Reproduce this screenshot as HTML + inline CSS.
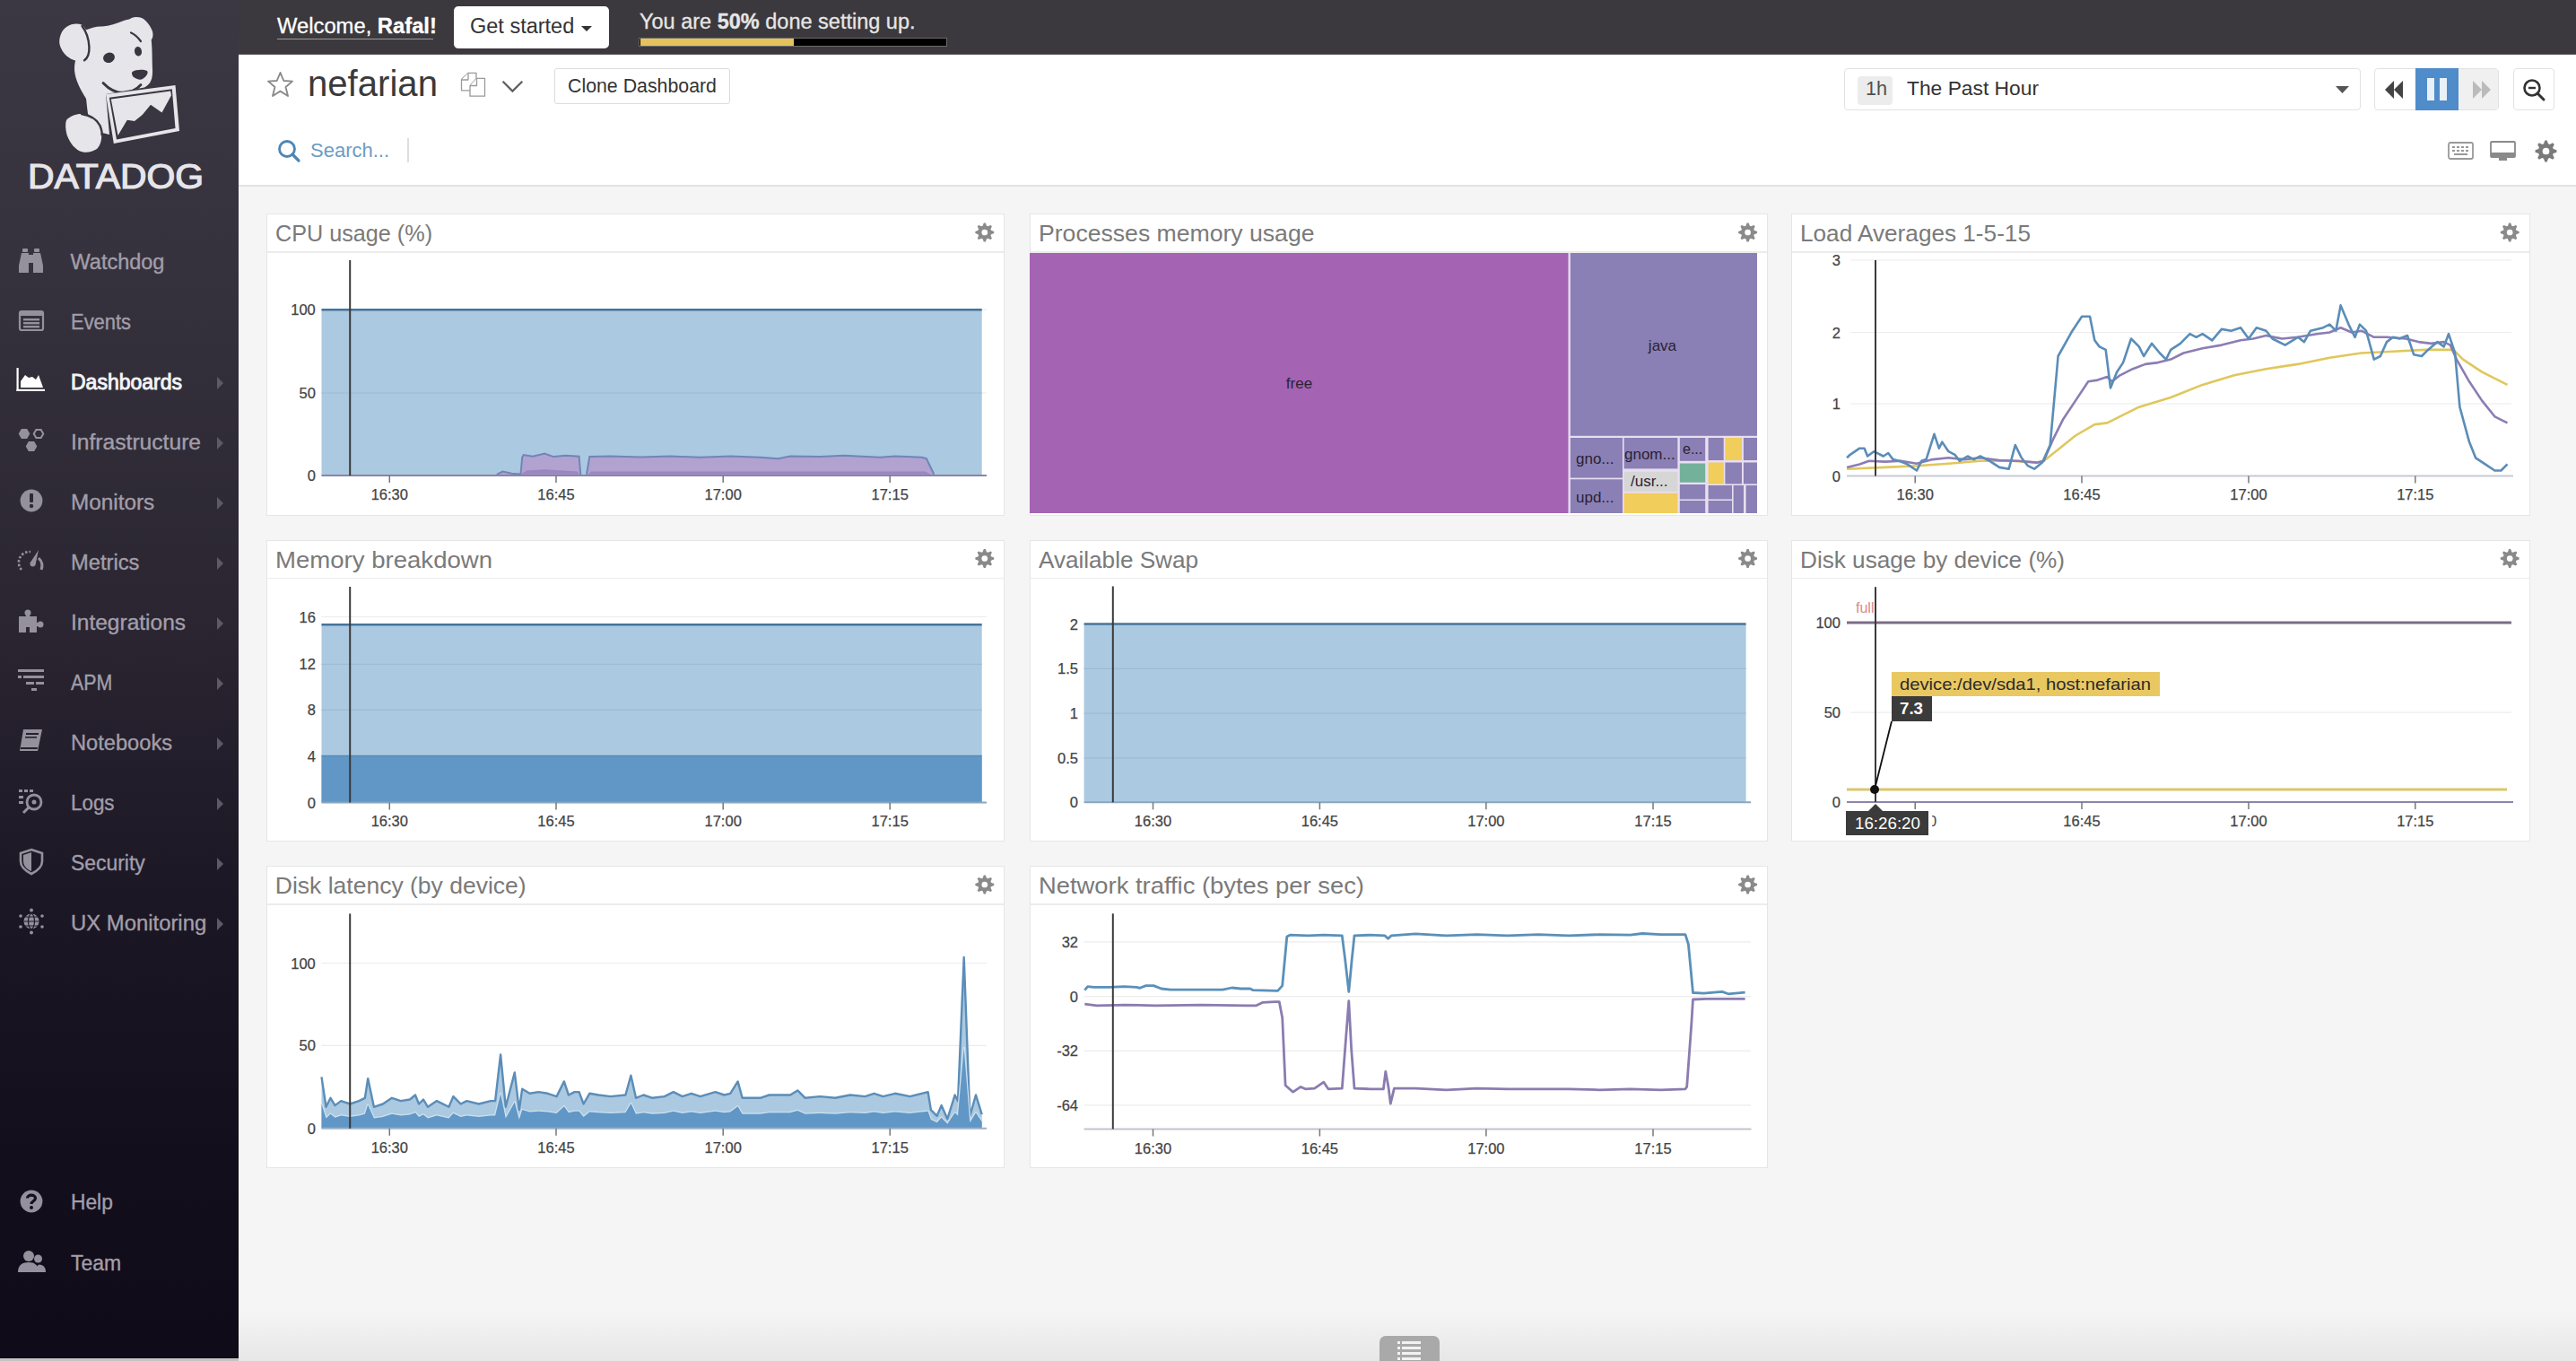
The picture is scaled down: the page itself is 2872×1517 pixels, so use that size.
<!DOCTYPE html>
<html><head><meta charset="utf-8"><title>Datadog</title><style>
*{margin:0;padding:0;box-sizing:border-box}
html,body{width:2872px;height:1517px;overflow:hidden;background:#f5f5f5;font-family:"Liberation Sans",sans-serif}
.t{position:absolute;white-space:nowrap}
.b{position:absolute}
svg{position:absolute;overflow:visible}
</style></head><body>
<div class="b" style="left:266.0px;top:0.0px;width:2606.0px;height:61.0px;background:#3b393d"></div>
<div class="b" style="left:266.0px;top:60.0px;width:2606.0px;height:1.0px;background:#5a585c"></div>
<div class="t" style="left:309.00px;top:17.61px;font-size:23.5px;line-height:23.5px;color:#ffffff;font-weight:normal;transform:scaleX(1.0115);transform-origin:0 0;-webkit-text-stroke:0.3px #fff;">Welcome, <b>Rafal!</b></div>
<div class="b" style="left:309.0px;top:42.5px;width:174.0px;height:1.5px;background:#9a9a9a"></div>
<div class="b" style="left:506.0px;top:7.0px;width:173.0px;height:47.0px;background:#fff;border-radius:5px"></div>
<div class="t" style="left:524.00px;top:17.61px;font-size:23.5px;line-height:23.5px;color:#333;font-weight:normal;">Get started</div>
<svg style="left:648px;top:29px" width="12" height="7"><polygon points="0,0 12,0 6,6" fill="#333"/></svg>
<div class="t" style="left:713.00px;top:12.61px;font-size:23.5px;line-height:23.5px;color:#e6e6e6;font-weight:normal;-webkit-text-stroke:0.3px #e6e6e6;">You are <b>50%</b> done setting up.</div>
<div class="b" style="left:712.0px;top:41.5px;width:344.0px;height:10.5px;background:#000;border:1.5px solid #6a6a6a"></div>
<div class="b" style="left:713.5px;top:43.0px;width:171.0px;height:7.5px;background:#e5c35c"></div>
<div class="b" style="left:266.0px;top:61.0px;width:2606.0px;height:145.5px;background:#fff"></div>
<div class="b" style="left:266.0px;top:206.0px;width:2606.0px;height:2.0px;background:#e2e2e2"></div>
<svg style="left:297px;top:78.5px" width="31" height="30" viewBox="0 0 31 30"><polygon points="15.5,2 19.3,11 29,11.6 21.5,18 24,28 15.5,22.6 7,28 9.5,18 2,11.6 11.7,11" fill="none" stroke="#8a8a8a" stroke-width="1.9" stroke-linejoin="round"/></svg>
<div class="t" style="left:343.00px;top:73.29px;font-size:41px;line-height:41px;color:#3a3a3a;font-weight:normal;transform:scaleX(0.9783);transform-origin:0 0;">nefarian</div>
<svg style="left:505px;top:75px" width="40" height="36" viewBox="0 0 40 36"><g fill="#fff" stroke="#9a9a9a" stroke-width="1.3" stroke-linejoin="round"><path d="M9.5 13.5 L17 6.3 H26 V25.8 H9.5 Z"/><path d="M17 6.3 V14 H9.5"/><path d="M19 20.5 L26.5 12.3 H35.5 V32.2 H19 Z"/><path d="M26.5 12.3 V20.5 H19"/></g></svg>
<svg style="left:559px;top:89px" width="26" height="16" viewBox="0 0 26 16"><polyline points="1.6,1.7 12.4,12.6 23.3,1.7" fill="none" stroke="#606060" stroke-width="2.3"/></svg>
<div class="b" style="left:618.0px;top:76.0px;width:196.0px;height:40.0px;border:1.5px solid #dcdcdc;border-radius:3px;background:#fff"></div>
<div class="t" style="left:633.00px;top:84.65px;font-size:22.5px;line-height:22.5px;color:#333;font-weight:normal;transform:scaleX(0.9477);transform-origin:0 0;">Clone Dashboard</div>
<svg style="left:309px;top:155px" width="28" height="26" viewBox="0 0 28 26"><circle cx="11" cy="11" r="8.5" fill="none" stroke="#4d86b5" stroke-width="2.8"/><path d="M17 17 L24 24" stroke="#4d86b5" stroke-width="3.2" stroke-linecap="round"/></svg>
<div class="t" style="left:346.00px;top:156.95px;font-size:22.5px;line-height:22.5px;color:#6c9cc1;font-weight:normal;transform:scaleX(0.9778);transform-origin:0 0;">Search...</div>
<div class="b" style="left:453.5px;top:154.0px;width:2.0px;height:27.0px;background:#dedede"></div>
<div class="b" style="left:2056.0px;top:76.0px;width:576.0px;height:47.0px;border:1.5px solid #e2e2e2;border-radius:4px;background:#fff"></div>
<div class="b" style="left:2071.0px;top:85.0px;width:39.0px;height:31.5px;background:#ececec;border-radius:4px"></div>
<div class="t" style="left:2079.50px;top:89.40px;font-size:21.5px;line-height:21.5px;color:#505050;font-weight:normal;transform:scaleX(1.0057);transform-origin:0 0;">1h</div>
<div class="t" style="left:2125.50px;top:89.40px;font-size:21.5px;line-height:21.5px;color:#333;font-weight:normal;transform:scaleX(1.0609);transform-origin:0 0;">The Past Hour</div>
<svg style="left:2604px;top:96px" width="15" height="9"><polygon points="0,0 15,0 7.5,8" fill="#555"/></svg>
<div class="b" style="left:2647.0px;top:76.0px;width:139.0px;height:47.0px;border:1.5px solid #e2e2e2;border-radius:4px;background:#fff;overflow:hidden"></div>
<div class="b" style="left:2741.0px;top:77.0px;width:44.0px;height:45.0px;background:#f0f0f0"></div>
<div class="b" style="left:2693.0px;top:76.0px;width:48.0px;height:47.0px;background:#4f8cc9"></div>
<svg style="left:2657px;top:88px" width="26" height="24" viewBox="0 0 26 24"><polygon points="12,2 2,12 12,22" fill="#444"/><polygon points="22,2 12,12 22,22" fill="#444"/></svg>
<div class="b" style="left:2706.0px;top:87.0px;width:8.0px;height:25.0px;background:#e8f0f8"></div>
<div class="b" style="left:2720.0px;top:87.0px;width:8.0px;height:25.0px;background:#e8f0f8"></div>
<svg style="left:2753px;top:88px" width="26" height="24" viewBox="0 0 26 24"><polygon points="4,2 14,12 4,22" fill="#bbb"/><polygon points="14,2 24,12 14,22" fill="#bbb"/></svg>
<div class="b" style="left:2802.0px;top:76.0px;width:46.0px;height:47.0px;border:1.5px solid #e2e2e2;border-radius:4px;background:#fff"></div>
<svg style="left:2812px;top:87px" width="28" height="26" viewBox="0 0 28 26"><circle cx="11" cy="11" r="8.5" fill="none" stroke="#333" stroke-width="2.6"/><path d="M7 11 H15" stroke="#333" stroke-width="2.4"/><path d="M17 17 L24 24" stroke="#333" stroke-width="3" stroke-linecap="round"/></svg>
<svg style="left:2729px;top:157px" width="29" height="22" viewBox="0 0 29 22"><rect x="1" y="2" width="27" height="18" rx="2" fill="none" stroke="#999" stroke-width="1.8"/><g fill="#999"><rect x="5" y="6" width="3" height="2"/><rect x="10" y="6" width="3" height="2"/><rect x="15" y="6" width="3" height="2"/><rect x="20" y="6" width="3" height="2"/><rect x="5" y="10" width="3" height="2"/><rect x="10" y="10" width="3" height="2"/><rect x="15" y="10" width="3" height="2"/><rect x="20" y="10" width="3" height="2"/><rect x="7" y="14" width="15" height="2"/></g></svg>
<svg style="left:2775px;top:156px" width="31" height="26" viewBox="0 0 31 26"><rect x="2" y="2" width="27" height="17" rx="1" fill="none" stroke="#8a8a8a" stroke-width="1.8"/><rect x="2" y="14" width="27" height="5" fill="#8a8a8a"/><rect x="11" y="19" width="9" height="4" fill="#8a8a8a"/></svg>
<svg style="left:0;top:0" width="1" height="1"><polygon points="2837.32,156.56 2839.68,156.56 2841.01,160.23 2842.57,160.88 2846.11,159.22 2847.78,160.89 2846.12,164.43 2846.77,165.99 2850.44,167.32 2850.44,169.68 2846.77,171.01 2846.12,172.57 2847.78,176.11 2846.11,177.78 2842.57,176.12 2841.01,176.77 2839.68,180.44 2837.32,180.44 2835.99,176.77 2834.43,176.12 2830.89,177.78 2829.22,176.11 2830.88,172.57 2830.23,171.01 2826.56,169.68 2826.56,167.32 2830.23,165.99 2830.88,164.43 2829.22,160.89 2830.89,159.22 2834.43,160.88 2835.99,160.23" fill="#7a7a7a"/><circle cx="2838.5" cy="168.5" r="3.84" fill="#fff"/></svg>
<div class="b" style="left:296.8px;top:238.0px;width:823.5px;height:336.5px;background:#fff;border:1.5px solid #e6e6e6"></div>
<div class="b" style="left:297.8px;top:280.0px;width:821.5px;height:1.5px;background:#ececec"></div>
<div class="t" style="left:306.80px;top:247.07px;font-size:26.5px;line-height:26.5px;color:#7a7a7a;font-weight:normal;transform:scaleX(0.9509);transform-origin:0 0;">CPU usage (%)</div>
<svg style="left:0;top:0" width="1" height="1"><polygon points="1096.77,248.55 1098.83,248.55 1099.99,251.77 1101.36,252.33 1104.46,250.88 1105.92,252.34 1104.47,255.44 1105.03,256.81 1108.25,257.97 1108.25,260.03 1105.03,261.19 1104.47,262.56 1105.92,265.66 1104.46,267.12 1101.36,265.67 1099.99,266.23 1098.83,269.45 1096.77,269.45 1095.61,266.23 1094.24,265.67 1091.14,267.12 1089.68,265.66 1091.13,262.56 1090.57,261.19 1087.35,260.03 1087.35,257.97 1090.57,256.81 1091.13,255.44 1089.68,252.34 1091.14,250.88 1094.24,252.33 1095.61,251.77" fill="#8a8a8a"/><circle cx="1097.8" cy="259" r="3.36" fill="#fff"/></svg>
<svg style="left:0;top:0" width="1" height="1"><line x1="358.5" y1="345.2" x2="1100" y2="345.2" stroke="#ececec" stroke-width="1.2"/><line x1="358.5" y1="438" x2="1100" y2="438" stroke="#ececec" stroke-width="1.2"/><rect x="358.5" y="345.2" width="736.2" height="184.8" fill="#abc9e0"/><line x1="358.5" y1="438" x2="1094.7" y2="438" stroke="#9dbbd3" stroke-width="1.2"/><polygon points="553.8,528.8 560.5,525.5 570.5,527.8 580.5,528.5 582.2,509.8 583.8,507.1 593.9,508.8 607.2,505.5 617.2,509.1 630.6,507.8 645.6,508.8 647.3,528.8 647.3,530.0 553.8,530.0" fill="#b2a2d0"/><polyline points="553.8,528.8 560.5,525.5 570.5,527.8 580.5,528.5 582.2,509.8 583.8,507.1 593.9,508.8 607.2,505.5 617.2,509.1 630.6,507.8 645.6,508.8 647.3,528.8" fill="none" stroke="#6f86b8" stroke-width="2"/><polygon points="654.0,528.8 657.3,509.1 680.7,508.5 714.1,509.5 747.4,508.5 780.8,509.8 814.2,508.5 847.6,509.8 867.6,511.2 881.0,508.5 914.4,509.1 941.1,507.8 981.2,509.8 997.9,508.5 1027.9,509.8 1032.9,511.2 1041.3,528.8 1041.3,530.0 654.0,530.0" fill="#b2a2d0"/><polyline points="654.0,528.8 657.3,509.1 680.7,508.5 714.1,509.5 747.4,508.5 780.8,509.8 814.2,508.5 847.6,509.8 867.6,511.2 881.0,508.5 914.4,509.1 941.1,507.8 981.2,509.8 997.9,508.5 1027.9,509.8 1032.9,511.2 1041.3,528.8" fill="none" stroke="#6f86b8" stroke-width="2"/><polygon points="580.5,528.8 587.2,524.5 607.2,523.2 643.9,525.5 645.6,528.8" fill="#9a86c0"/><polygon points="655.6,528.8 659.0,525.5 1031.3,525.5 1037.9,528.8" fill="#9a86c0"/><line x1="358.5" y1="345.2" x2="1094.7" y2="345.2" stroke="#46749c" stroke-width="2.6"/><line x1="358.5" y1="530" x2="1100" y2="530" stroke="#8a84a6" stroke-width="2"/><line x1="434.3" y1="530" x2="434.3" y2="538" stroke="#777" stroke-width="1.5"/><line x1="620" y1="530" x2="620" y2="538" stroke="#777" stroke-width="1.5"/><line x1="806.2" y1="530" x2="806.2" y2="538" stroke="#777" stroke-width="1.5"/><line x1="992.2" y1="530" x2="992.2" y2="538" stroke="#777" stroke-width="1.5"/><line x1="390.2" y1="290" x2="390.2" y2="530" stroke="#3a3a3a" stroke-width="2"/></svg>
<div class="t" style="left:324.25px;top:337.23px;font-size:16.5px;line-height:16.5px;color:#444;font-weight:normal;-webkit-text-stroke:0.25px #444;">100</div>
<div class="t" style="left:333.49px;top:430.03px;font-size:16.5px;line-height:16.5px;color:#444;font-weight:normal;-webkit-text-stroke:0.25px #444;">50</div>
<div class="t" style="left:342.64px;top:522.03px;font-size:16.5px;line-height:16.5px;color:#444;font-weight:normal;-webkit-text-stroke:0.25px #444;">0</div>
<div class="t" style="left:413.63px;top:542.53px;font-size:16.5px;line-height:16.5px;color:#444;font-weight:normal;-webkit-text-stroke:0.25px #444;">16:30</div>
<div class="t" style="left:599.33px;top:542.53px;font-size:16.5px;line-height:16.5px;color:#444;font-weight:normal;-webkit-text-stroke:0.25px #444;">16:45</div>
<div class="t" style="left:785.53px;top:542.53px;font-size:16.5px;line-height:16.5px;color:#444;font-weight:normal;-webkit-text-stroke:0.25px #444;">17:00</div>
<div class="t" style="left:971.53px;top:542.53px;font-size:16.5px;line-height:16.5px;color:#444;font-weight:normal;-webkit-text-stroke:0.25px #444;">17:15</div>
<div class="b" style="left:1147.6px;top:238.0px;width:823.5px;height:336.5px;background:#fff;border:1.5px solid #e6e6e6"></div>
<div class="b" style="left:1148.6px;top:280.0px;width:821.5px;height:1.5px;background:#ececec"></div>
<div class="t" style="left:1157.60px;top:247.07px;font-size:26.5px;line-height:26.5px;color:#7a7a7a;font-weight:normal;transform:scaleX(1.0038);transform-origin:0 0;">Processes memory usage</div>
<svg style="left:0;top:0" width="1" height="1"><polygon points="1947.57,248.55 1949.63,248.55 1950.79,251.77 1952.16,252.33 1955.26,250.88 1956.72,252.34 1955.27,255.44 1955.83,256.81 1959.05,257.97 1959.05,260.03 1955.83,261.19 1955.27,262.56 1956.72,265.66 1955.26,267.12 1952.16,265.67 1950.79,266.23 1949.63,269.45 1947.57,269.45 1946.41,266.23 1945.04,265.67 1941.94,267.12 1940.48,265.66 1941.93,262.56 1941.37,261.19 1938.15,260.03 1938.15,257.97 1941.37,256.81 1941.93,255.44 1940.48,252.34 1941.94,250.88 1945.04,252.33 1946.41,251.77" fill="#8a8a8a"/><circle cx="1948.6" cy="259" r="3.36" fill="#fff"/></svg>
<svg style="left:0;top:0" width="1" height="1"><rect x="1148" y="282" width="811" height="290" fill="#e9def0"/><rect x="1148" y="282" width="600.5" height="290.0" fill="#a463b3"/><rect x="1750.8" y="282" width="208.2" height="203.8" fill="#8a80b5"/><rect x="1750.8" y="488" width="58.2" height="44.6" fill="#8a80b5"/><rect x="1750.8" y="534.3" width="58.2" height="37.7" fill="#8a80b5"/><rect x="1810.6" y="488" width="59.8" height="34.4" fill="#8a80b5"/><rect x="1810.6" y="525.8" width="59.8" height="22.2" fill="#d6d6d6"/><rect x="1810.6" y="549.7" width="59.8" height="22.3" fill="#f1cd5b"/><rect x="1872.8" y="488" width="28.4" height="25.8" fill="#8a80b5"/><rect x="1872.8" y="516.5" width="28.4" height="21.2" fill="#74b19b"/><rect x="1872.8" y="540" width="28.4" height="16.5" fill="#8a80b5"/><rect x="1872.8" y="558" width="28.4" height="14.0" fill="#8a80b5"/><rect x="1904.6" y="488" width="17.1" height="25.0" fill="#8a80b5"/><rect x="1904.6" y="515.5" width="17.1" height="23.9" fill="#f1cd5b"/><rect x="1923.4" y="488" width="18.6" height="25.0" fill="#f1cd5b"/><rect x="1943.9" y="488" width="15.1" height="25.0" fill="#8a80b5"/><rect x="1923.4" y="515.5" width="18.6" height="23.9" fill="#8a80b5"/><rect x="1943.9" y="515.5" width="15.1" height="23.9" fill="#8a80b5"/><rect x="1904.6" y="541" width="26.4" height="15.5" fill="#8a80b5"/><rect x="1904.6" y="558" width="26.4" height="14.0" fill="#8a80b5"/><rect x="1932.6" y="541" width="11.4" height="31.0" fill="#8a80b5"/><rect x="1946.6" y="541" width="12.4" height="31.0" fill="#8a80b5"/></svg>
<div class="t" style="left:1433.84px;top:418.61px;font-size:17px;line-height:17px;color:#2a2233;font-weight:normal;">free</div>
<div class="t" style="left:1837.87px;top:376.61px;font-size:17px;line-height:17px;color:#2a2233;font-weight:normal;">java</div>
<div class="t" style="left:1757.00px;top:502.61px;font-size:17px;line-height:17px;color:#2a2233;font-weight:normal;">gno...</div>
<div class="t" style="left:1757.00px;top:545.61px;font-size:17px;line-height:17px;color:#2a2233;font-weight:normal;">upd...</div>
<div class="t" style="left:1811.00px;top:497.61px;font-size:17px;line-height:17px;color:#2a2233;font-weight:normal;">gnom...</div>
<div class="t" style="left:1818.00px;top:527.61px;font-size:17px;line-height:17px;color:#2a2233;font-weight:normal;">/usr...</div>
<div class="t" style="left:1876.00px;top:493.46px;font-size:16px;line-height:16px;color:#2a2233;font-weight:normal;">e...</div>
<div class="b" style="left:1997.2px;top:238.0px;width:823.5px;height:336.5px;background:#fff;border:1.5px solid #e6e6e6"></div>
<div class="b" style="left:1998.2px;top:280.0px;width:821.5px;height:1.5px;background:#ececec"></div>
<div class="t" style="left:2007.20px;top:247.07px;font-size:26.5px;line-height:26.5px;color:#7a7a7a;font-weight:normal;transform:scaleX(0.9871);transform-origin:0 0;">Load Averages 1-5-15</div>
<svg style="left:0;top:0" width="1" height="1"><polygon points="2797.17,248.55 2799.23,248.55 2800.39,251.77 2801.76,252.33 2804.86,250.88 2806.32,252.34 2804.87,255.44 2805.43,256.81 2808.65,257.97 2808.65,260.03 2805.43,261.19 2804.87,262.56 2806.32,265.66 2804.86,267.12 2801.76,265.67 2800.39,266.23 2799.23,269.45 2797.17,269.45 2796.01,266.23 2794.64,265.67 2791.54,267.12 2790.08,265.66 2791.53,262.56 2790.97,261.19 2787.75,260.03 2787.75,257.97 2790.97,256.81 2791.53,255.44 2790.08,252.34 2791.54,250.88 2794.64,252.33 2796.01,251.77" fill="#8a8a8a"/><circle cx="2798.2" cy="259" r="3.36" fill="#fff"/></svg>
<svg style="left:0;top:0" width="1" height="1"><line x1="2063" y1="290" x2="2800" y2="290" stroke="#ececec" stroke-width="1.2"/><line x1="2063" y1="370.5" x2="2800" y2="370.5" stroke="#ececec" stroke-width="1.2"/><line x1="2063" y1="450" x2="2800" y2="450" stroke="#ececec" stroke-width="1.2"/><polyline points="2059.1,522.7 2101.6,520.9 2137.0,519.2 2172.4,516.7 2207.8,513.8 2243.2,513.8 2271.5,515.6 2278.6,513.8 2296.3,499.7 2314.0,485.5 2335.3,473.1 2349.4,471.4 2384.8,453.7 2420.2,443.0 2455.6,428.9 2491.0,418.3 2526.5,411.2 2561.9,405.9 2597.3,398.8 2632.7,393.5 2668.1,391.7 2703.5,389.9 2735.3,389.9 2746.0,400.6 2767.2,414.7 2795.5,428.9" fill="none" stroke="#e0c75c" stroke-width="2.6" stroke-linejoin="round"/><polyline points="2059.1,520.9 2073.3,517.4 2083.9,513.8 2101.6,514.6 2119.3,513.8 2137.0,516.7 2154.7,512.1 2172.4,510.3 2190.1,512.1 2207.8,510.3 2229.1,513.1 2250.3,513.8 2271.5,515.6 2278.6,513.8 2289.3,489.1 2299.9,467.8 2314.0,446.6 2328.2,425.3 2338.8,423.6 2349.4,420.0 2354.7,425.3 2363.6,418.3 2377.8,411.2 2391.9,405.9 2406.1,404.1 2420.2,400.6 2434.4,393.5 2455.6,388.2 2476.9,384.6 2498.1,379.3 2512.3,377.5 2526.5,374.0 2544.2,377.5 2561.9,375.8 2583.1,372.2 2597.3,370.5 2609.6,365.2 2622.0,370.5 2632.7,368.7 2646.8,375.8 2661.0,375.8 2682.2,377.5 2696.4,381.1 2710.5,382.9 2724.7,381.1 2731.8,384.6 2738.9,400.6 2753.0,425.3 2767.2,446.6 2781.4,464.3 2795.5,471.4" fill="none" stroke="#8b7db3" stroke-width="2.6" stroke-linejoin="round"/><polyline points="2059.1,510.3 2062.7,506.8 2073.3,499.7 2078.6,499.7 2082.1,508.5 2089.2,503.2 2099.8,508.5 2105.2,505.0 2110.5,512.1 2117.5,513.8 2126.4,517.4 2137.0,524.5 2142.3,513.8 2147.6,512.1 2156.5,483.8 2161.8,499.7 2165.3,492.6 2172.4,503.2 2179.5,506.8 2184.8,513.8 2193.7,508.5 2200.7,512.1 2207.8,508.5 2218.4,513.8 2229.1,520.9 2239.7,522.7 2246.8,496.1 2253.8,510.3 2260.9,519.2 2268.0,522.7 2276.9,515.6 2285.7,496.1 2294.6,397.0 2310.5,368.7 2321.1,352.8 2330.0,352.8 2335.3,379.3 2340.6,386.4 2347.7,389.9 2353.0,432.4 2360.1,414.7 2367.1,404.1 2376.0,377.5 2384.8,386.4 2390.1,397.0 2399.0,382.9 2407.9,393.5 2414.9,400.6 2420.2,389.9 2430.9,382.9 2441.5,372.2 2448.6,375.8 2455.6,372.2 2466.3,379.3 2476.9,366.9 2487.5,368.7 2498.1,365.2 2507.0,377.5 2515.8,365.2 2526.5,368.7 2533.5,377.5 2547.7,384.6 2561.9,375.8 2568.9,381.1 2576.0,368.7 2590.2,365.2 2597.3,361.6 2604.3,368.7 2609.6,340.4 2618.5,361.6 2625.6,375.8 2630.9,361.6 2638.0,368.7 2646.8,400.6 2653.9,397.0 2661.0,381.1 2668.1,375.8 2675.1,377.5 2684.0,374.0 2691.1,395.2 2699.9,397.0 2707.0,389.9 2717.6,381.1 2724.7,386.4 2730.0,372.2 2737.1,393.5 2742.4,453.7 2753.0,492.6 2760.1,510.3 2770.7,517.4 2781.4,524.5 2788.4,524.5 2795.5,517.4" fill="none" stroke="#5a8db8" stroke-width="2.6" stroke-linejoin="round"/><line x1="2059" y1="530.5" x2="2802" y2="530.5" stroke="#c9c9d3" stroke-width="2"/><line x1="2135.2" y1="530.5" x2="2135.2" y2="538.5" stroke="#777" stroke-width="1.5"/><line x1="2321" y1="530.5" x2="2321" y2="538.5" stroke="#777" stroke-width="1.5"/><line x1="2507" y1="530.5" x2="2507" y2="538.5" stroke="#777" stroke-width="1.5"/><line x1="2692.8" y1="530.5" x2="2692.8" y2="538.5" stroke="#777" stroke-width="1.5"/><line x1="2091" y1="290" x2="2091" y2="530.5" stroke="#3a3a3a" stroke-width="2"/></svg>
<div class="t" style="left:2042.84px;top:282.03px;font-size:16.5px;line-height:16.5px;color:#444;font-weight:normal;-webkit-text-stroke:0.25px #444;">3</div>
<div class="t" style="left:2042.84px;top:362.53px;font-size:16.5px;line-height:16.5px;color:#444;font-weight:normal;-webkit-text-stroke:0.25px #444;">2</div>
<div class="t" style="left:2042.84px;top:442.03px;font-size:16.5px;line-height:16.5px;color:#444;font-weight:normal;-webkit-text-stroke:0.25px #444;">1</div>
<div class="t" style="left:2042.84px;top:522.53px;font-size:16.5px;line-height:16.5px;color:#444;font-weight:normal;-webkit-text-stroke:0.25px #444;">0</div>
<div class="t" style="left:2114.53px;top:543.03px;font-size:16.5px;line-height:16.5px;color:#444;font-weight:normal;-webkit-text-stroke:0.25px #444;">16:30</div>
<div class="t" style="left:2300.33px;top:543.03px;font-size:16.5px;line-height:16.5px;color:#444;font-weight:normal;-webkit-text-stroke:0.25px #444;">16:45</div>
<div class="t" style="left:2486.33px;top:543.03px;font-size:16.5px;line-height:16.5px;color:#444;font-weight:normal;-webkit-text-stroke:0.25px #444;">17:00</div>
<div class="t" style="left:2672.13px;top:543.03px;font-size:16.5px;line-height:16.5px;color:#444;font-weight:normal;-webkit-text-stroke:0.25px #444;">17:15</div>
<div class="b" style="left:296.8px;top:601.5px;width:823.5px;height:336.5px;background:#fff;border:1.5px solid #e6e6e6"></div>
<div class="b" style="left:297.8px;top:643.5px;width:821.5px;height:1.5px;background:#ececec"></div>
<div class="t" style="left:306.80px;top:610.57px;font-size:26.5px;line-height:26.5px;color:#7a7a7a;font-weight:normal;transform:scaleX(1.0401);transform-origin:0 0;">Memory breakdown</div>
<svg style="left:0;top:0" width="1" height="1"><polygon points="1096.77,612.05 1098.83,612.05 1099.99,615.27 1101.36,615.83 1104.46,614.38 1105.92,615.84 1104.47,618.94 1105.03,620.31 1108.25,621.47 1108.25,623.53 1105.03,624.69 1104.47,626.06 1105.92,629.16 1104.46,630.62 1101.36,629.17 1099.99,629.73 1098.83,632.95 1096.77,632.95 1095.61,629.73 1094.24,629.17 1091.14,630.62 1089.68,629.16 1091.13,626.06 1090.57,624.69 1087.35,623.53 1087.35,621.47 1090.57,620.31 1091.13,618.94 1089.68,615.84 1091.14,614.38 1094.24,615.83 1095.61,615.27" fill="#8a8a8a"/><circle cx="1097.8" cy="622.5" r="3.36" fill="#fff"/></svg>
<svg style="left:0;top:0" width="1" height="1"><line x1="358.5" y1="687.5" x2="1100" y2="687.5" stroke="#ececec" stroke-width="1.2"/><rect x="358.5" y="696.2" width="736.2" height="198.3" fill="#abc9e0"/><rect x="358.5" y="842.5" width="736.2" height="52.0" fill="#6097c6"/><line x1="358.5" y1="740.3" x2="1094.7" y2="740.3" stroke="#9dbbd3" stroke-width="1.2"/><line x1="358.5" y1="791.4" x2="1094.7" y2="791.4" stroke="#9dbbd3" stroke-width="1.2"/><line x1="358.5" y1="696.2" x2="1094.7" y2="696.2" stroke="#46749c" stroke-width="2.6"/><line x1="358.5" y1="842.5" x2="1094.7" y2="842.5" stroke="#5a8ab8" stroke-width="1.5"/><line x1="358.5" y1="894.5" x2="1100" y2="894.5" stroke="#8aa6c0" stroke-width="2"/><line x1="434.3" y1="894.5" x2="434.3" y2="902.5" stroke="#777" stroke-width="1.5"/><line x1="620" y1="894.5" x2="620" y2="902.5" stroke="#777" stroke-width="1.5"/><line x1="806.2" y1="894.5" x2="806.2" y2="902.5" stroke="#777" stroke-width="1.5"/><line x1="992.2" y1="894.5" x2="992.2" y2="902.5" stroke="#777" stroke-width="1.5"/><line x1="390.2" y1="654" x2="390.2" y2="894.5" stroke="#3a3a3a" stroke-width="2"/></svg>
<div class="t" style="left:333.49px;top:679.53px;font-size:16.5px;line-height:16.5px;color:#444;font-weight:normal;-webkit-text-stroke:0.25px #444;">16</div>
<div class="t" style="left:333.49px;top:732.33px;font-size:16.5px;line-height:16.5px;color:#444;font-weight:normal;-webkit-text-stroke:0.25px #444;">12</div>
<div class="t" style="left:342.64px;top:783.43px;font-size:16.5px;line-height:16.5px;color:#444;font-weight:normal;-webkit-text-stroke:0.25px #444;">8</div>
<div class="t" style="left:342.64px;top:835.13px;font-size:16.5px;line-height:16.5px;color:#444;font-weight:normal;-webkit-text-stroke:0.25px #444;">4</div>
<div class="t" style="left:342.64px;top:886.53px;font-size:16.5px;line-height:16.5px;color:#444;font-weight:normal;-webkit-text-stroke:0.25px #444;">0</div>
<div class="t" style="left:413.63px;top:907.03px;font-size:16.5px;line-height:16.5px;color:#444;font-weight:normal;-webkit-text-stroke:0.25px #444;">16:30</div>
<div class="t" style="left:599.33px;top:907.03px;font-size:16.5px;line-height:16.5px;color:#444;font-weight:normal;-webkit-text-stroke:0.25px #444;">16:45</div>
<div class="t" style="left:785.53px;top:907.03px;font-size:16.5px;line-height:16.5px;color:#444;font-weight:normal;-webkit-text-stroke:0.25px #444;">17:00</div>
<div class="t" style="left:971.53px;top:907.03px;font-size:16.5px;line-height:16.5px;color:#444;font-weight:normal;-webkit-text-stroke:0.25px #444;">17:15</div>
<div class="b" style="left:1147.6px;top:601.5px;width:823.5px;height:336.5px;background:#fff;border:1.5px solid #e6e6e6"></div>
<div class="b" style="left:1148.6px;top:643.5px;width:821.5px;height:1.5px;background:#ececec"></div>
<div class="t" style="left:1157.60px;top:610.57px;font-size:26.5px;line-height:26.5px;color:#7a7a7a;font-weight:normal;transform:scaleX(0.9849);transform-origin:0 0;">Available Swap</div>
<svg style="left:0;top:0" width="1" height="1"><polygon points="1947.57,612.05 1949.63,612.05 1950.79,615.27 1952.16,615.83 1955.26,614.38 1956.72,615.84 1955.27,618.94 1955.83,620.31 1959.05,621.47 1959.05,623.53 1955.83,624.69 1955.27,626.06 1956.72,629.16 1955.26,630.62 1952.16,629.17 1950.79,629.73 1949.63,632.95 1947.57,632.95 1946.41,629.73 1945.04,629.17 1941.94,630.62 1940.48,629.16 1941.93,626.06 1941.37,624.69 1938.15,623.53 1938.15,621.47 1941.37,620.31 1941.93,618.94 1940.48,615.84 1941.94,614.38 1945.04,615.83 1946.41,615.27" fill="#8a8a8a"/><circle cx="1948.6" cy="622.5" r="3.36" fill="#fff"/></svg>
<svg style="left:0;top:0" width="1" height="1"><rect x="1208.6" y="695.5" width="738.0" height="198.8" fill="#abc9e0"/><line x1="1208.6" y1="745.4" x2="1946.6" y2="745.4" stroke="#9dbbd3" stroke-width="1.2"/><line x1="1208.6" y1="795.2" x2="1946.6" y2="795.2" stroke="#9dbbd3" stroke-width="1.2"/><line x1="1208.6" y1="844.8" x2="1946.6" y2="844.8" stroke="#9dbbd3" stroke-width="1.2"/><line x1="1208.6" y1="695.5" x2="1946.6" y2="695.5" stroke="#46749c" stroke-width="2.6"/><line x1="1208.6" y1="894.3" x2="1952" y2="894.3" stroke="#8aa6c0" stroke-width="2"/><line x1="1285.5" y1="894.3" x2="1285.5" y2="902.3" stroke="#777" stroke-width="1.5"/><line x1="1471.4" y1="894.3" x2="1471.4" y2="902.3" stroke="#777" stroke-width="1.5"/><line x1="1656.9" y1="894.3" x2="1656.9" y2="902.3" stroke="#777" stroke-width="1.5"/><line x1="1843" y1="894.3" x2="1843" y2="902.3" stroke="#777" stroke-width="1.5"/><line x1="1240.8" y1="653.5" x2="1240.8" y2="894.3" stroke="#3a3a3a" stroke-width="2"/></svg>
<div class="t" style="left:1192.84px;top:687.53px;font-size:16.5px;line-height:16.5px;color:#444;font-weight:normal;-webkit-text-stroke:0.25px #444;">2</div>
<div class="t" style="left:1179.07px;top:737.43px;font-size:16.5px;line-height:16.5px;color:#444;font-weight:normal;-webkit-text-stroke:0.25px #444;">1.5</div>
<div class="t" style="left:1192.84px;top:787.23px;font-size:16.5px;line-height:16.5px;color:#444;font-weight:normal;-webkit-text-stroke:0.25px #444;">1</div>
<div class="t" style="left:1179.07px;top:836.83px;font-size:16.5px;line-height:16.5px;color:#444;font-weight:normal;-webkit-text-stroke:0.25px #444;">0.5</div>
<div class="t" style="left:1192.84px;top:886.33px;font-size:16.5px;line-height:16.5px;color:#444;font-weight:normal;-webkit-text-stroke:0.25px #444;">0</div>
<div class="t" style="left:1264.83px;top:906.83px;font-size:16.5px;line-height:16.5px;color:#444;font-weight:normal;-webkit-text-stroke:0.25px #444;">16:30</div>
<div class="t" style="left:1450.73px;top:906.83px;font-size:16.5px;line-height:16.5px;color:#444;font-weight:normal;-webkit-text-stroke:0.25px #444;">16:45</div>
<div class="t" style="left:1636.23px;top:906.83px;font-size:16.5px;line-height:16.5px;color:#444;font-weight:normal;-webkit-text-stroke:0.25px #444;">17:00</div>
<div class="t" style="left:1822.33px;top:906.83px;font-size:16.5px;line-height:16.5px;color:#444;font-weight:normal;-webkit-text-stroke:0.25px #444;">17:15</div>
<div class="b" style="left:1997.2px;top:601.5px;width:823.5px;height:336.5px;background:#fff;border:1.5px solid #e6e6e6"></div>
<div class="b" style="left:1998.2px;top:643.5px;width:821.5px;height:1.5px;background:#ececec"></div>
<div class="t" style="left:2007.20px;top:610.57px;font-size:26.5px;line-height:26.5px;color:#7a7a7a;font-weight:normal;transform:scaleX(0.9869);transform-origin:0 0;">Disk usage by device (%)</div>
<svg style="left:0;top:0" width="1" height="1"><polygon points="2797.17,612.05 2799.23,612.05 2800.39,615.27 2801.76,615.83 2804.86,614.38 2806.32,615.84 2804.87,618.94 2805.43,620.31 2808.65,621.47 2808.65,623.53 2805.43,624.69 2804.87,626.06 2806.32,629.16 2804.86,630.62 2801.76,629.17 2800.39,629.73 2799.23,632.95 2797.17,632.95 2796.01,629.73 2794.64,629.17 2791.54,630.62 2790.08,629.16 2791.53,626.06 2790.97,624.69 2787.75,623.53 2787.75,621.47 2790.97,620.31 2791.53,618.94 2790.08,615.84 2791.54,614.38 2794.64,615.83 2796.01,615.27" fill="#8a8a8a"/><circle cx="2798.2" cy="622.5" r="3.36" fill="#fff"/></svg>
<svg style="left:0;top:0" width="1" height="1"><line x1="2063" y1="794.2" x2="2800" y2="794.2" stroke="#ececec" stroke-width="1.2"/><line x1="2059" y1="694" x2="2800" y2="694" stroke="#7c6c86" stroke-width="3"/><line x1="2059" y1="880" x2="2795" y2="880" stroke="#d8c66e" stroke-width="3.2"/><line x1="2059" y1="894" x2="2802" y2="894" stroke="#8a85ab" stroke-width="2"/><line x1="2135.2" y1="894" x2="2135.2" y2="902" stroke="#777" stroke-width="1.5"/><line x1="2321" y1="894" x2="2321" y2="902" stroke="#777" stroke-width="1.5"/><line x1="2507" y1="894" x2="2507" y2="902" stroke="#777" stroke-width="1.5"/><line x1="2692.8" y1="894" x2="2692.8" y2="902" stroke="#777" stroke-width="1.5"/><line x1="2091" y1="654.3" x2="2091" y2="894" stroke="#3a3a3a" stroke-width="2"/><line x1="2090" y1="880" x2="2109" y2="804" stroke="#111" stroke-width="1.8"/><circle cx="2090" cy="880" r="5" fill="#111"/><polygon points="2083,904 2091,896 2099,904" fill="#3a3a3a"/></svg>
<div class="t" style="left:2069.00px;top:670.46px;font-size:16px;line-height:16px;color:#d98a8a;font-weight:normal;">full</div>
<div class="b" style="left:2108.7px;top:748.9px;width:299.0px;height:27.0px;background:#e9c862"></div>
<div class="t" style="left:2118.00px;top:753.42px;font-size:19px;line-height:19px;color:#2b2b2b;font-weight:normal;transform:scaleX(1.0644);transform-origin:0 0;">device:/dev/sda1, host:nefarian</div>
<div class="b" style="left:2108.7px;top:775.8px;width:45.0px;height:28.2px;background:#3b3b3b"></div>
<div class="t" style="left:2118.00px;top:780.76px;font-size:18px;line-height:18px;color:#fff;font-weight:bold;transform:scaleX(1.0392);transform-origin:0 0;">7.3</div>
<div class="b" style="left:2058.0px;top:904.0px;width:92.0px;height:26.5px;background:#3b3b3b"></div>
<div class="t" style="left:2068.00px;top:908.42px;font-size:19px;line-height:19px;color:#fff;font-weight:normal;transform:scaleX(0.9864);transform-origin:0 0;">16:26:20</div>
<div class="t" style="left:2024.44px;top:686.03px;font-size:16.5px;line-height:16.5px;color:#444;font-weight:normal;-webkit-text-stroke:0.25px #444;">100</div>
<div class="t" style="left:2033.68px;top:786.23px;font-size:16.5px;line-height:16.5px;color:#444;font-weight:normal;-webkit-text-stroke:0.25px #444;">50</div>
<div class="t" style="left:2042.84px;top:886.03px;font-size:16.5px;line-height:16.5px;color:#444;font-weight:normal;-webkit-text-stroke:0.25px #444;">0</div>
<div class="t" style="left:2150.00px;top:906.63px;font-size:16.5px;line-height:16.5px;color:#444;font-weight:normal;clip-path:inset(0 0 0 45%);">0</div>
<div class="t" style="left:2300.33px;top:906.63px;font-size:16.5px;line-height:16.5px;color:#444;font-weight:normal;-webkit-text-stroke:0.25px #444;">16:45</div>
<div class="t" style="left:2486.33px;top:906.63px;font-size:16.5px;line-height:16.5px;color:#444;font-weight:normal;-webkit-text-stroke:0.25px #444;">17:00</div>
<div class="t" style="left:2672.13px;top:906.63px;font-size:16.5px;line-height:16.5px;color:#444;font-weight:normal;-webkit-text-stroke:0.25px #444;">17:15</div>
<div class="b" style="left:296.8px;top:965.0px;width:823.5px;height:336.5px;background:#fff;border:1.5px solid #e6e6e6"></div>
<div class="b" style="left:297.8px;top:1007.0px;width:821.5px;height:1.5px;background:#ececec"></div>
<div class="t" style="left:306.80px;top:974.07px;font-size:26.5px;line-height:26.5px;color:#7a7a7a;font-weight:normal;">Disk latency (by device)</div>
<svg style="left:0;top:0" width="1" height="1"><polygon points="1096.77,975.55 1098.83,975.55 1099.99,978.77 1101.36,979.33 1104.46,977.88 1105.92,979.34 1104.47,982.44 1105.03,983.81 1108.25,984.97 1108.25,987.03 1105.03,988.19 1104.47,989.56 1105.92,992.66 1104.46,994.12 1101.36,992.67 1099.99,993.23 1098.83,996.45 1096.77,996.45 1095.61,993.23 1094.24,992.67 1091.14,994.12 1089.68,992.66 1091.13,989.56 1090.57,988.19 1087.35,987.03 1087.35,984.97 1090.57,983.81 1091.13,982.44 1089.68,979.34 1091.14,977.88 1094.24,979.33 1095.61,978.77" fill="#8a8a8a"/><circle cx="1097.8" cy="986" r="3.36" fill="#fff"/></svg>
<svg style="left:0;top:0" width="1" height="1"><line x1="358.5" y1="1073.5" x2="1100" y2="1073.5" stroke="#ececec" stroke-width="1.2"/><line x1="358.5" y1="1165.4" x2="1100" y2="1165.4" stroke="#ececec" stroke-width="1.2"/><polygon points="358.5,1200.4 363.5,1233.8 368.5,1223.8 373.5,1232.1 380.2,1227.1 390.2,1230.5 400.2,1227.1 406.9,1223.8 410.2,1202.1 416.9,1233.8 426.9,1230.5 436.9,1223.8 446.9,1227.1 457.0,1225.5 463.0,1220.5 467.0,1230.5 472.0,1225.5 477.0,1233.8 487.0,1227.1 500.4,1233.8 505.4,1222.1 513.7,1230.5 520.4,1227.1 533.8,1230.5 547.1,1227.1 552.1,1227.1 558.1,1175.4 563.8,1233.8 573.8,1195.4 578.8,1237.1 582.2,1213.8 590.5,1218.8 600.5,1217.1 610.6,1218.8 620.6,1222.1 628.9,1205.4 633.9,1220.5 640.6,1217.1 645.6,1217.1 650.6,1230.5 657.3,1218.8 667.3,1220.5 680.7,1222.1 697.4,1220.5 703.4,1198.7 709.0,1223.8 717.4,1220.5 727.4,1223.8 740.8,1222.1 750.8,1217.1 760.8,1222.1 770.8,1218.8 780.8,1222.1 797.5,1217.1 807.5,1220.5 814.2,1218.8 822.6,1205.4 827.6,1223.8 847.6,1223.8 857.6,1220.5 871.0,1220.5 881.0,1220.5 889.3,1215.4 897.7,1223.8 914.4,1222.1 931.1,1223.8 947.8,1220.5 964.5,1222.1 974.5,1218.8 984.5,1222.1 997.9,1218.8 1014.6,1222.1 1034.6,1217.1 1037.9,1237.1 1044.6,1243.8 1049.6,1232.1 1056.3,1247.2 1064.6,1220.5 1068.0,1227.1 1074.7,1066.9 1081.3,1243.8 1088.0,1220.5 1094.7,1242.2 1094.7,1257.8 358.5,1257.8" fill="#abc9e0"/><polyline points="358.5,1200.4 363.5,1233.8 368.5,1223.8 373.5,1232.1 380.2,1227.1 390.2,1230.5 400.2,1227.1 406.9,1223.8 410.2,1202.1 416.9,1233.8 426.9,1230.5 436.9,1223.8 446.9,1227.1 457.0,1225.5 463.0,1220.5 467.0,1230.5 472.0,1225.5 477.0,1233.8 487.0,1227.1 500.4,1233.8 505.4,1222.1 513.7,1230.5 520.4,1227.1 533.8,1230.5 547.1,1227.1 552.1,1227.1 558.1,1175.4 563.8,1233.8 573.8,1195.4 578.8,1237.1 582.2,1213.8 590.5,1218.8 600.5,1217.1 610.6,1218.8 620.6,1222.1 628.9,1205.4 633.9,1220.5 640.6,1217.1 645.6,1217.1 650.6,1230.5 657.3,1218.8 667.3,1220.5 680.7,1222.1 697.4,1220.5 703.4,1198.7 709.0,1223.8 717.4,1220.5 727.4,1223.8 740.8,1222.1 750.8,1217.1 760.8,1222.1 770.8,1218.8 780.8,1222.1 797.5,1217.1 807.5,1220.5 814.2,1218.8 822.6,1205.4 827.6,1223.8 847.6,1223.8 857.6,1220.5 871.0,1220.5 881.0,1220.5 889.3,1215.4 897.7,1223.8 914.4,1222.1 931.1,1223.8 947.8,1220.5 964.5,1222.1 974.5,1218.8 984.5,1222.1 997.9,1218.8 1014.6,1222.1 1034.6,1217.1 1037.9,1237.1 1044.6,1243.8 1049.6,1232.1 1056.3,1247.2 1064.6,1220.5 1068.0,1227.1 1074.7,1066.9 1081.3,1243.8 1088.0,1220.5 1094.7,1242.2" fill="none" stroke="#5b8db8" stroke-width="2.4" stroke-linejoin="round"/><polyline points="358.5,1230.8 363.5,1246.5 368.5,1241.8 373.5,1245.7 380.2,1243.4 390.2,1245.0 400.2,1243.4 406.9,1241.8 410.2,1231.6 416.9,1246.5 426.9,1245.0 436.9,1241.8 446.9,1243.4 457.0,1242.6 463.0,1240.2 467.0,1245.0 472.0,1242.6 477.0,1246.5 487.0,1243.4 500.4,1246.5 505.4,1241.0 513.7,1245.0 520.4,1243.4 533.8,1245.0 547.1,1243.4 552.1,1243.4 558.1,1219.1 563.8,1246.5 573.8,1228.5 578.8,1248.1 582.2,1237.1 590.5,1239.5 600.5,1238.7 610.6,1239.5 620.6,1241.0 628.9,1233.2 633.9,1240.2 640.6,1238.7 645.6,1238.7 650.6,1245.0 657.3,1239.5 667.3,1240.2 680.7,1241.0 697.4,1240.2 703.4,1230.0 709.0,1241.8 717.4,1240.2 727.4,1241.8 740.8,1241.0 750.8,1238.7 760.8,1241.0 770.8,1239.5 780.8,1241.0 797.5,1238.7 807.5,1240.2 814.2,1239.5 822.6,1233.2 827.6,1241.8 847.6,1241.8 857.6,1240.2 871.0,1240.2 881.0,1240.2 889.3,1237.9 897.7,1241.8 914.4,1241.0 931.1,1241.8 947.8,1240.2 964.5,1241.0 974.5,1239.5 984.5,1241.0 997.9,1239.5 1014.6,1241.0 1034.6,1238.7 1037.9,1248.1 1044.6,1251.2 1049.6,1245.7 1056.3,1252.8 1064.6,1240.2 1068.0,1243.4 1074.7,1168.1 1081.3,1251.2 1088.0,1240.2 1094.7,1250.4" fill="none" stroke="#cfe0ee" stroke-width="2.5" stroke-linejoin="round"/><polygon points="358.5,1230.8 363.5,1246.5 368.5,1241.8 373.5,1245.7 380.2,1243.4 390.2,1245.0 400.2,1243.4 406.9,1241.8 410.2,1231.6 416.9,1246.5 426.9,1245.0 436.9,1241.8 446.9,1243.4 457.0,1242.6 463.0,1240.2 467.0,1245.0 472.0,1242.6 477.0,1246.5 487.0,1243.4 500.4,1246.5 505.4,1241.0 513.7,1245.0 520.4,1243.4 533.8,1245.0 547.1,1243.4 552.1,1243.4 558.1,1219.1 563.8,1246.5 573.8,1228.5 578.8,1248.1 582.2,1237.1 590.5,1239.5 600.5,1238.7 610.6,1239.5 620.6,1241.0 628.9,1233.2 633.9,1240.2 640.6,1238.7 645.6,1238.7 650.6,1245.0 657.3,1239.5 667.3,1240.2 680.7,1241.0 697.4,1240.2 703.4,1230.0 709.0,1241.8 717.4,1240.2 727.4,1241.8 740.8,1241.0 750.8,1238.7 760.8,1241.0 770.8,1239.5 780.8,1241.0 797.5,1238.7 807.5,1240.2 814.2,1239.5 822.6,1233.2 827.6,1241.8 847.6,1241.8 857.6,1240.2 871.0,1240.2 881.0,1240.2 889.3,1237.9 897.7,1241.8 914.4,1241.0 931.1,1241.8 947.8,1240.2 964.5,1241.0 974.5,1239.5 984.5,1241.0 997.9,1239.5 1014.6,1241.0 1034.6,1238.7 1037.9,1248.1 1044.6,1251.2 1049.6,1245.7 1056.3,1252.8 1064.6,1240.2 1068.0,1243.4 1074.7,1168.1 1081.3,1251.2 1088.0,1240.2 1094.7,1250.4 1094.7,1257.8 358.5,1257.8" fill="#6097c6"/><line x1="358.5" y1="1257.8" x2="1100" y2="1257.8" stroke="#9ab0c8" stroke-width="2"/><line x1="434.3" y1="1257.8" x2="434.3" y2="1265.8" stroke="#777" stroke-width="1.5"/><line x1="620" y1="1257.8" x2="620" y2="1265.8" stroke="#777" stroke-width="1.5"/><line x1="806.2" y1="1257.8" x2="806.2" y2="1265.8" stroke="#777" stroke-width="1.5"/><line x1="992.2" y1="1257.8" x2="992.2" y2="1265.8" stroke="#777" stroke-width="1.5"/><line x1="390.2" y1="1018.4" x2="390.2" y2="1257.8" stroke="#3a3a3a" stroke-width="2"/></svg>
<div class="t" style="left:324.25px;top:1065.53px;font-size:16.5px;line-height:16.5px;color:#444;font-weight:normal;-webkit-text-stroke:0.25px #444;">100</div>
<div class="t" style="left:333.49px;top:1157.43px;font-size:16.5px;line-height:16.5px;color:#444;font-weight:normal;-webkit-text-stroke:0.25px #444;">50</div>
<div class="t" style="left:342.64px;top:1249.83px;font-size:16.5px;line-height:16.5px;color:#444;font-weight:normal;-webkit-text-stroke:0.25px #444;">0</div>
<div class="t" style="left:413.63px;top:1270.93px;font-size:16.5px;line-height:16.5px;color:#444;font-weight:normal;-webkit-text-stroke:0.25px #444;">16:30</div>
<div class="t" style="left:599.33px;top:1270.93px;font-size:16.5px;line-height:16.5px;color:#444;font-weight:normal;-webkit-text-stroke:0.25px #444;">16:45</div>
<div class="t" style="left:785.53px;top:1270.93px;font-size:16.5px;line-height:16.5px;color:#444;font-weight:normal;-webkit-text-stroke:0.25px #444;">17:00</div>
<div class="t" style="left:971.53px;top:1270.93px;font-size:16.5px;line-height:16.5px;color:#444;font-weight:normal;-webkit-text-stroke:0.25px #444;">17:15</div>
<div class="b" style="left:1147.6px;top:965.0px;width:823.5px;height:336.5px;background:#fff;border:1.5px solid #e6e6e6"></div>
<div class="b" style="left:1148.6px;top:1007.0px;width:821.5px;height:1.5px;background:#ececec"></div>
<div class="t" style="left:1157.60px;top:974.07px;font-size:26.5px;line-height:26.5px;color:#7a7a7a;font-weight:normal;transform:scaleX(1.0327);transform-origin:0 0;">Network traffic (bytes per sec)</div>
<svg style="left:0;top:0" width="1" height="1"><polygon points="1947.57,975.55 1949.63,975.55 1950.79,978.77 1952.16,979.33 1955.26,977.88 1956.72,979.34 1955.27,982.44 1955.83,983.81 1959.05,984.97 1959.05,987.03 1955.83,988.19 1955.27,989.56 1956.72,992.66 1955.26,994.12 1952.16,992.67 1950.79,993.23 1949.63,996.45 1947.57,996.45 1946.41,993.23 1945.04,992.67 1941.94,994.12 1940.48,992.66 1941.93,989.56 1941.37,988.19 1938.15,987.03 1938.15,984.97 1941.37,983.81 1941.93,982.44 1940.48,979.34 1941.94,977.88 1945.04,979.33 1946.41,978.77" fill="#8a8a8a"/><circle cx="1948.6" cy="986" r="3.36" fill="#fff"/></svg>
<svg style="left:0;top:0" width="1" height="1"><line x1="1208.6" y1="1049.8" x2="1952" y2="1049.8" stroke="#ececec" stroke-width="1.2"/><line x1="1208.6" y1="1110.6" x2="1952" y2="1110.6" stroke="#ececec" stroke-width="1.2"/><line x1="1208.6" y1="1171.4" x2="1952" y2="1171.4" stroke="#ececec" stroke-width="1.2"/><line x1="1208.6" y1="1231.9" x2="1952" y2="1231.9" stroke="#ececec" stroke-width="1.2"/><polyline points="1209.3,1119.1 1223.0,1120.8 1253.7,1120.1 1287.9,1120.8 1339.2,1120.1 1390.4,1120.8 1400.6,1120.8 1407.5,1117.4 1421.1,1116.7 1426.3,1116.7 1429.7,1134.5 1433.1,1209.7 1441.6,1217.2 1450.2,1211.4 1455.3,1213.8 1465.6,1213.1 1475.8,1206.2 1480.9,1213.8 1496.3,1213.1 1499.7,1168.7 1503.8,1115.7 1506.6,1168.7 1510.0,1213.1 1527.1,1213.8 1542.4,1213.8 1544.8,1194.3 1548.2,1213.1 1550.3,1230.2 1554.4,1213.1 1578.3,1213.1 1612.5,1214.8 1646.6,1213.1 1680.8,1213.8 1715.0,1213.8 1749.1,1213.8 1783.3,1214.8 1817.5,1213.8 1851.6,1214.8 1879.0,1213.8 1880.7,1211.4 1885.8,1141.3 1887.5,1114.0 1902.9,1113.3 1945.6,1113.3" fill="none" stroke="#8a7cb0" stroke-width="2.8" stroke-linejoin="round"/><polyline points="1209.3,1103.7 1212.7,1099.6 1219.6,1100.3 1236.7,1100.3 1253.7,1099.6 1267.4,1100.3 1270.8,1101.3 1277.7,1098.6 1286.2,1098.6 1294.7,1102.0 1305.0,1103.1 1339.2,1103.1 1363.1,1103.1 1373.3,1101.0 1383.6,1102.0 1393.8,1102.0 1397.2,1103.7 1424.6,1104.4 1429.7,1098.6 1434.8,1044.0 1438.2,1042.2 1458.7,1042.9 1475.8,1042.2 1496.3,1042.9 1499.7,1069.6 1503.8,1105.4 1507.2,1069.6 1510.0,1042.9 1527.1,1042.2 1544.1,1042.9 1547.6,1046.3 1551.0,1042.9 1578.3,1040.9 1612.5,1042.9 1646.6,1041.6 1680.8,1042.9 1715.0,1041.6 1749.1,1042.9 1783.3,1041.6 1817.5,1042.2 1831.1,1040.5 1851.6,1041.6 1879.0,1041.6 1882.4,1052.5 1887.5,1106.5 1899.5,1107.2 1920.0,1105.4 1926.8,1107.8 1945.6,1106.1" fill="none" stroke="#5a90b9" stroke-width="2.8" stroke-linejoin="round"/><line x1="1208.6" y1="1258.5" x2="1952.4" y2="1258.5" stroke="#c3c3cc" stroke-width="2"/><line x1="1285.5" y1="1258.5" x2="1285.5" y2="1266.5" stroke="#777" stroke-width="1.5"/><line x1="1471.4" y1="1258.5" x2="1471.4" y2="1266.5" stroke="#777" stroke-width="1.5"/><line x1="1656.9" y1="1258.5" x2="1656.9" y2="1266.5" stroke="#777" stroke-width="1.5"/><line x1="1843" y1="1258.5" x2="1843" y2="1266.5" stroke="#777" stroke-width="1.5"/><line x1="1240.8" y1="1018.3" x2="1240.8" y2="1258.5" stroke="#3a3a3a" stroke-width="2"/></svg>
<div class="t" style="left:1183.68px;top:1041.83px;font-size:16.5px;line-height:16.5px;color:#444;font-weight:normal;-webkit-text-stroke:0.25px #444;">32</div>
<div class="t" style="left:1192.84px;top:1102.63px;font-size:16.5px;line-height:16.5px;color:#444;font-weight:normal;-webkit-text-stroke:0.25px #444;">0</div>
<div class="t" style="left:1178.16px;top:1163.43px;font-size:16.5px;line-height:16.5px;color:#444;font-weight:normal;-webkit-text-stroke:0.25px #444;">-32</div>
<div class="t" style="left:1178.16px;top:1223.93px;font-size:16.5px;line-height:16.5px;color:#444;font-weight:normal;-webkit-text-stroke:0.25px #444;">-64</div>
<div class="t" style="left:1264.83px;top:1272.03px;font-size:16.5px;line-height:16.5px;color:#444;font-weight:normal;-webkit-text-stroke:0.25px #444;">16:30</div>
<div class="t" style="left:1450.73px;top:1272.03px;font-size:16.5px;line-height:16.5px;color:#444;font-weight:normal;-webkit-text-stroke:0.25px #444;">16:45</div>
<div class="t" style="left:1636.23px;top:1272.03px;font-size:16.5px;line-height:16.5px;color:#444;font-weight:normal;-webkit-text-stroke:0.25px #444;">17:00</div>
<div class="t" style="left:1822.33px;top:1272.03px;font-size:16.5px;line-height:16.5px;color:#444;font-weight:normal;-webkit-text-stroke:0.25px #444;">17:15</div>
<div class="b" style="left:266.0px;top:1460.0px;width:2606.0px;height:57.0px;background:linear-gradient(180deg,rgba(0,0,0,0) 0%,rgba(0,0,0,0.06) 100%)"></div>
<div class="b" style="left:1538.0px;top:1488.7px;width:67.4px;height:40.0px;background:#a9a9a9;border-radius:7px 7px 0 0"></div>
<svg style="left:1557px;top:1494px" width="30" height="24" viewBox="0 0 30 24"><g fill="#f2f2f2"><rect x="1" y="1" width="3" height="3"/><rect x="6" y="1" width="21" height="3"/><rect x="1" y="7" width="3" height="3"/><rect x="6" y="7" width="21" height="3"/><rect x="1" y="13" width="3" height="3"/><rect x="6" y="13" width="21" height="3"/><rect x="1" y="19" width="3" height="3"/><rect x="6" y="19" width="21" height="3"/></g></svg>
<div class="b" style="left:0;top:0;width:266px;height:1514px;background:linear-gradient(180deg,#3c3843 0px,#36323d 300px,#2a2531 700px,#1c1724 1000px,#130e1b 1300px,#100b18 1514px)"></div>
<div class="b" style="left:0.0px;top:1514.0px;width:266.0px;height:3.0px;background:#c4c4c4"></div>
<svg style="left:50px;top:10px" width="170" height="170" viewBox="0 0 170 170">
<g fill="#e6e5e9">
<path d="M16.2 36.2 C16.5 29 20 22 25 19.5 C29 17 35 15.5 41 17.5 C45 20 48.5 28 49.5 35 C50.5 42 50 50 48.7 53.7 C46 57 38 58 33.7 57.5 C27 55.5 21 50 18.7 45 C17 42 16.2 39 16.2 36.2 Z"/>
<path d="M44 24 C52 21 58 19 64 19.5 C72 19 80 16 88 13 C94 11 98 11 99 12 L118 30 C120 40 119.5 55 120 67 C120.5 78 118 84 111 87.5 L68 95 L72 140 L52 135 C48 122 47 108 46 100 C40 90 34 80 33 68 C33 60 34 56 36 55 C44 50 47 40 44 24 Z"/>
<path d="M95 11 C99 8.5 104 8.5 108 10 C113 12.5 118 19 120 25 C121 29 120.5 33 118 35 C115 36 111 33 107 29.5 C103 26.5 99 25 96 26 C95 21 94.5 14 95 11 Z"/>
<path d="M24 124 C28.5 118.5 36 116.5 42 117 C50 118.5 58 124 62 133 C64.5 142 63 151 58 156 C52 160 44 161 38 158 C31 154 26.5 146 24.5 140 C23 134 22.5 128 24 124 Z"/>
</g>
<g fill="#3a3641">
<ellipse cx="71.5" cy="54.3" rx="6.6" ry="5.6" transform="rotate(-18 71.5 54.3)"/>
<ellipse cx="104" cy="47.2" rx="4" ry="5.3" transform="rotate(-10 104 47.2)"/>
<path d="M97.5 70 C101 67.5 110 67 114 69 C116 71 113 76 108 78.5 C105 79 101 78 98.5 75.5 C97 73.5 96.5 71.5 97.5 70 Z"/>
</g>
<g fill="none" stroke="#3a3641" stroke-linecap="round">
<path d="M41.5 19 C46 25 49 34 49.4 42 C49.8 49 48.5 54 44 57.3" stroke-width="2.4"/>
<path d="M96 26.5 C100 28 104 32 107 36" stroke-width="2.2"/>
<path d="M65 82.5 C71 89 79 93.5 88 93.5 C96 93 103 89 107 84.5" stroke-width="2.8"/>
<path d="M41 117 C50 118.5 58 123 61.5 130 C63 134 64 138 63.5 140" stroke-width="2.4"/>
</g>
<polygon points="68,95 145.5,85 150,136 76.8,150" fill="#e6e5e9"/>
<polygon points="71.8,98.7 141.8,89.3 145.5,133 80,145.5" fill="#3a3641"/>
<polygon points="73.8,100.5 140.2,91.5 141,96.2 130.5,115.5 118,106.8 108.7,118 100,125 91.8,123.7 81.5,141" fill="#e6e5e9"/>
</svg>
<div class="t" style="left:31.30px;top:178.41px;font-size:38.5px;line-height:38.5px;color:#e6e5e9;font-weight:normal;transform:scaleX(1.0617);transform-origin:0 0;-webkit-text-stroke:1.2px #e6e5e9;">DATADOG</div>
<div class="t" style="left:78.50px;top:280.81px;font-size:23.5px;line-height:23.5px;color:#a29eaa;font-weight:normal;-webkit-text-stroke:0.35px #a29eaa;">Watchdog</div>
<div class="t" style="left:78.50px;top:347.81px;font-size:23.5px;line-height:23.5px;color:#a29eaa;font-weight:normal;transform:scaleX(0.9332);transform-origin:0 0;-webkit-text-stroke:0.35px #a29eaa;">Events</div>
<div class="t" style="left:78.50px;top:414.81px;font-size:23.5px;line-height:23.5px;color:#f4f4f6;font-weight:normal;transform:scaleX(0.9790);transform-origin:0 0;-webkit-text-stroke:0.9px #f4f4f6;">Dashboards</div>
<svg style="left:241px;top:419.7px" width="9" height="14"><polygon points="1,0 8,7 1,14" fill="#5e5966"/></svg>
<div class="t" style="left:78.50px;top:481.81px;font-size:23.5px;line-height:23.5px;color:#a29eaa;font-weight:normal;transform:scaleX(1.0476);transform-origin:0 0;-webkit-text-stroke:0.35px #a29eaa;">Infrastructure</div>
<svg style="left:241px;top:486.7px" width="9" height="14"><polygon points="1,0 8,7 1,14" fill="#5e5966"/></svg>
<div class="t" style="left:78.50px;top:548.81px;font-size:23.5px;line-height:23.5px;color:#a29eaa;font-weight:normal;transform:scaleX(1.0341);transform-origin:0 0;-webkit-text-stroke:0.35px #a29eaa;">Monitors</div>
<svg style="left:241px;top:553.7px" width="9" height="14"><polygon points="1,0 8,7 1,14" fill="#5e5966"/></svg>
<div class="t" style="left:78.50px;top:615.81px;font-size:23.5px;line-height:23.5px;color:#a29eaa;font-weight:normal;transform:scaleX(1.0096);transform-origin:0 0;-webkit-text-stroke:0.35px #a29eaa;">Metrics</div>
<svg style="left:241px;top:620.7px" width="9" height="14"><polygon points="1,0 8,7 1,14" fill="#5e5966"/></svg>
<div class="t" style="left:78.50px;top:682.81px;font-size:23.5px;line-height:23.5px;color:#a29eaa;font-weight:normal;transform:scaleX(1.0425);transform-origin:0 0;-webkit-text-stroke:0.35px #a29eaa;">Integrations</div>
<svg style="left:241px;top:687.7px" width="9" height="14"><polygon points="1,0 8,7 1,14" fill="#5e5966"/></svg>
<div class="t" style="left:78.50px;top:749.81px;font-size:23.5px;line-height:23.5px;color:#a29eaa;font-weight:normal;transform:scaleX(0.9081);transform-origin:0 0;-webkit-text-stroke:0.35px #a29eaa;">APM</div>
<svg style="left:241px;top:754.7px" width="9" height="14"><polygon points="1,0 8,7 1,14" fill="#5e5966"/></svg>
<div class="t" style="left:78.50px;top:816.81px;font-size:23.5px;line-height:23.5px;color:#a29eaa;font-weight:normal;transform:scaleX(1.0060);transform-origin:0 0;-webkit-text-stroke:0.35px #a29eaa;">Notebooks</div>
<svg style="left:241px;top:821.7px" width="9" height="14"><polygon points="1,0 8,7 1,14" fill="#5e5966"/></svg>
<div class="t" style="left:78.50px;top:883.81px;font-size:23.5px;line-height:23.5px;color:#a29eaa;font-weight:normal;transform:scaleX(0.9530);transform-origin:0 0;-webkit-text-stroke:0.35px #a29eaa;">Logs</div>
<svg style="left:241px;top:888.7px" width="9" height="14"><polygon points="1,0 8,7 1,14" fill="#5e5966"/></svg>
<div class="t" style="left:78.50px;top:950.81px;font-size:23.5px;line-height:23.5px;color:#a29eaa;font-weight:normal;transform:scaleX(0.9748);transform-origin:0 0;-webkit-text-stroke:0.35px #a29eaa;">Security</div>
<svg style="left:241px;top:955.7px" width="9" height="14"><polygon points="1,0 8,7 1,14" fill="#5e5966"/></svg>
<div class="t" style="left:78.50px;top:1017.81px;font-size:23.5px;line-height:23.5px;color:#a29eaa;font-weight:normal;transform:scaleX(1.0156);transform-origin:0 0;-webkit-text-stroke:0.35px #a29eaa;">UX Monitoring</div>
<svg style="left:241px;top:1022.7px" width="9" height="14"><polygon points="1,0 8,7 1,14" fill="#5e5966"/></svg>
<svg style="left:20px;top:275.5px" width="30" height="30" viewBox="0 0 30 30"><g fill="#95919c"><rect x="5" y="1" width="6" height="4" rx="1"/><rect x="18" y="1" width="6" height="4" rx="1"/><path d="M4 6 H12 V28 H1 V20 Z"/><path d="M17 6 H25 L28 20 V28 H17 Z"/><rect x="11" y="8" width="7" height="9"/></g></svg>
<svg style="left:20px;top:343.0px" width="30" height="30" viewBox="0 0 30 30"><g fill="none" stroke="#95919c" stroke-width="2.2"><rect x="2" y="4" width="26" height="21" rx="2"/></g><g fill="#95919c"><rect x="2" y="4" width="26" height="5"/><rect x="6" y="12" width="18" height="2.4"/><rect x="6" y="16" width="18" height="2.4"/><rect x="6" y="20" width="18" height="2.4"/></g></svg>
<svg style="left:20px;top:410.0px" width="30" height="30" viewBox="0 0 30 30"><g fill="#fff"><rect x="-1.5" y="0" width="2.2" height="26"/><rect x="-1.5" y="23.8" width="31.5" height="2.2"/><path d="M3 22 L3 15 L8 8 L12 11 L16 10 L20 13 L23 8 L27 19 L28 22 Z"/></g></svg>
<svg style="left:20px;top:477.0px" width="30" height="30" viewBox="0 0 30 30"><polygon points="13.30,6.50 10.15,11.96 3.85,11.96 0.70,6.50 3.85,1.04 10.15,1.04" fill="#95919c"/><polygon points="21.30,20.50 18.15,25.96 11.85,25.96 8.70,20.50 11.85,15.04 18.15,15.04" fill="#95919c"/><polygon points="28.30,6.50 25.65,11.09 20.35,11.09 17.70,6.50 20.35,1.91 25.65,1.91" fill="none" stroke="#95919c" stroke-width="2"/></svg>
<svg style="left:20px;top:543.3px" width="30" height="30" viewBox="0 0 30 30"><circle cx="15" cy="15" r="12.4" fill="#95919c"/><rect x="13" y="7" width="4" height="10" rx="1" fill="#2e2a35"/><circle cx="15" cy="21" r="2.2" fill="#2e2a35"/></svg>
<svg style="left:20px;top:610.0px" width="30" height="30" viewBox="0 0 30 30"><g fill="none" stroke="#95919c" stroke-width="2.6" stroke-dasharray="2.5 2"><path d="M4 25 A12 12 0 0 1 14 5"/></g><path d="M13.5 17.5 L23 3 L19.5 19.5 Z" fill="#95919c"/><circle cx="16.5" cy="18.5" r="3" fill="#95919c"/><path d="M23 12 A12 12 0 0 1 26 25" fill="none" stroke="#95919c" stroke-width="3"/></svg>
<svg style="left:20px;top:677.0px" width="30" height="30" viewBox="0 0 30 30"><g fill="#95919c"><rect x="1" y="10" width="20" height="18"/><circle cx="11" cy="6" r="3.5"/><rect x="9" y="6" width="4" height="5"/><circle cx="25" cy="19" r="3.5"/><rect x="20" y="17" width="5" height="4"/></g><rect x="9" y="22" width="4" height="6" fill="#2c2733"/></svg>
<svg style="left:20px;top:743.5px" width="30" height="30" viewBox="0 0 30 30"><g fill="#95919c"><rect x="0" y="2" width="29" height="3"/><rect x="0" y="9" width="4" height="3"/><rect x="6" y="9" width="23" height="3"/><rect x="9" y="16" width="9" height="3"/><rect x="20" y="16" width="9" height="3"/><rect x="15" y="23" width="6" height="3"/></g></svg>
<svg style="left:20px;top:811.0px" width="30" height="30" viewBox="0 0 30 30"><g fill="#95919c"><path d="M6 2 H27 L22 26 H2 Z"/></g><g fill="#25202c"><rect x="9" y="6" width="14" height="2"/><rect x="8" y="10" width="13" height="1.6"/><path d="M3 22 H22 L21.5 24 H3 Z"/></g></svg>
<svg style="left:20px;top:878.0px" width="30" height="30" viewBox="0 0 30 30"><g fill="#95919c"><rect x="1" y="2" width="4" height="3"/><rect x="7" y="2" width="4" height="3"/><rect x="13" y="2" width="4" height="3"/><rect x="1" y="9" width="5" height="3"/><rect x="1" y="15" width="5" height="3"/></g><circle cx="18" cy="16" r="8" fill="none" stroke="#95919c" stroke-width="2.8"/><circle cx="18" cy="16" r="2.5" fill="#95919c"/><path d="M12 22 L6 28" stroke="#95919c" stroke-width="3"/></svg>
<svg style="left:20px;top:945.0px" width="30" height="30" viewBox="0 0 30 30"><path d="M15 2 L27 6 V15 C27 22 21 26 15 29 C9 26 3 22 3 15 V6 Z" fill="none" stroke="#95919c" stroke-width="2.6"/><path d="M15 5 V26 C10 24 6 20 6 15 V8 Z" fill="#95919c"/></svg>
<svg style="left:20px;top:1012.0px" width="30" height="30" viewBox="0 0 30 30"><circle cx="15" cy="15" r="8.5" fill="#95919c"/><g fill="none" stroke="#1e1926" stroke-width="1.2"><ellipse cx="15" cy="15" rx="3.5" ry="8.5"/><path d="M6.5 15 H23.5 M8 10 H22 M8 20 H22"/></g><g fill="#95919c"><circle cx="15" cy="2.5" r="2"/><circle cx="15" cy="27.5" r="2"/><circle cx="3" cy="9" r="1.8"/><circle cx="27" cy="9" r="1.8"/><circle cx="3" cy="21" r="1.8"/><circle cx="27" cy="21" r="1.8"/></g></svg>
<svg style="left:20px;top:1324.4px" width="30" height="30" viewBox="0 0 30 30"><circle cx="15" cy="15" r="12.4" fill="#95919c"/><path d="M10.5 11.5 C10.5 7 19.5 7 19.5 11.5 C19.5 15 15 14.5 15 18" fill="none" stroke="#14101c" stroke-width="3.2"/><circle cx="15" cy="22" r="2" fill="#14101c"/></svg>
<svg style="left:20px;top:1391.4px" width="30" height="30" viewBox="0 0 30 30"><g fill="#95919c"><circle cx="12" cy="9" r="6"/><path d="M0 27 C0 19 5 16 12 16 C19 16 23 19 23 27 Z"/><circle cx="22.5" cy="12" r="4.5"/><path d="M20 27 C20 21 22 19 24 18.5 C28 19 31 21 31 27 Z"/></g><path d="M17 14 C19 18 21 18 21 18" stroke="#14101c" stroke-width="1.5" fill="none"/></svg>
<div class="t" style="left:78.80px;top:1329.11px;font-size:23.5px;line-height:23.5px;color:#a29eaa;font-weight:normal;transform:scaleX(0.9691);transform-origin:0 0;-webkit-text-stroke:0.35px #a29eaa;">Help</div>
<div class="t" style="left:78.50px;top:1397.11px;font-size:23.5px;line-height:23.5px;color:#a29eaa;font-weight:normal;transform:scaleX(0.9781);transform-origin:0 0;-webkit-text-stroke:0.35px #a29eaa;">Team</div>
</body></html>
